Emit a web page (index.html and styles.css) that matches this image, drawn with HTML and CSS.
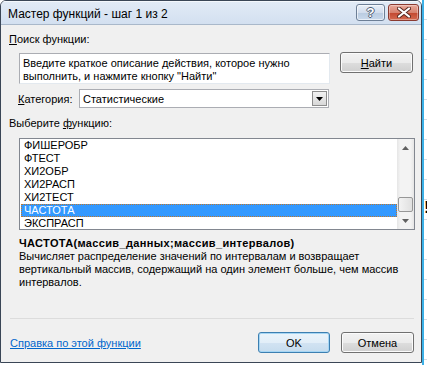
FILE: index.html
```html
<!DOCTYPE html>
<html lang="ru">
<head>
  <meta charset="UTF-8">
  <meta name="viewport" content="width=device-width, initial-scale=1.0">
  <title>Мастер функций - шаг 1 из 2</title>
  <link rel="stylesheet" href="styles.css">
</head>
<body>
  <div class="screen">
    <div class="dialog">
      <div class="titlebar">
        <span class="title">Мастер функций - шаг 1 из 2</span>
        <div class="caption-buttons">
          <span class="cap-btn help"><span class="help-glyph">?</span></span>
          <span class="cap-btn close">
            <svg width="14" height="11" viewBox="0 0 14 11">
              <path d="M2 1.5 L12 9.5 M12 1.5 L2 9.5" stroke="#5a2a22" stroke-width="4" stroke-linecap="round"/>
              <path d="M2 1.5 L12 9.5 M12 1.5 L2 9.5" stroke="#fff" stroke-width="2.2" stroke-linecap="round"/>
            </svg>
          </span>
        </div>
      </div>

      <div class="client">
        <div class="label first"><u>П</u>оиск функции:</div>

        <div class="search-row">
          <div class="search-box">Введите краткое описание действия, которое нужно<br>выполнить, и нажмите кнопку "Найти"</div>
          <button class="btn find"><u>Н</u>айти</button>
        </div>

        <div class="category-row">
          <span class="category-label"><u>К</u>атегория:</span>
          <div class="select">
            <span class="select-value">Статистические</span>
            <span class="select-arrow">
              <svg width="7" height="4" viewBox="0 0 7 4"><path d="M0 0 H7 L3.5 4 Z" fill="#000"/></svg>
            </span>
          </div>
        </div>

        <div class="label pick">Выберите <u>ф</u>ункцию:</div>

        <div class="listbox">
          <ul class="items">
            <li>ФИШЕРОБР</li>
            <li>ФТЕСТ</li>
            <li>ХИ2ОБР</li>
            <li>ХИ2РАСП</li>
            <li>ХИ2ТЕСТ</li>
            <li class="selected">ЧАСТОТА</li>
            <li>ЭКСПРАСП</li>
          </ul>
          <div class="scrollbar">
            <div class="scroll-btn">
              <svg width="7" height="4" viewBox="0 0 7 4"><path d="M0 4 H7 L3.5 0 Z" fill="#606060"/></svg>
            </div>
            <div class="track"><div class="thumb"></div></div>
            <div class="scroll-btn">
              <svg width="7" height="4" viewBox="0 0 7 4"><path d="M0 0 H7 L3.5 4 Z" fill="#606060"/></svg>
            </div>
          </div>
        </div>

        <div class="signature">ЧАСТОТА(массив_данных;массив_интервалов)</div>
        <p class="description">Вычисляет распределение значений по интервалам и возвращает<br>вертикальный массив, содержащий на один элемент больше, чем массив<br>интервалов.</p>

        <div class="separator"></div>

        <div class="footer">
          <a class="help-link" href="#">Справка по этой функции</a>
          <button class="btn default">OK</button>
          <button class="btn cancel">Отмена</button>
        </div>
      </div>
    </div>
    <div class="edge"></div>
    <div class="sheet"><span class="bang">!</span></div>
  </div>
</body>
</html>
```

FILE: styles.css
```css
* {
  box-sizing: border-box;
}
body {
  margin: 0;
  background: #fff;
  font-family: "Liberation Sans", Arial, sans-serif;
  font-size: 11px;
  color: #000;
}
.screen {
  display: flex;
  width: 427px;
  height: 365px;
  overflow: hidden;
}
.dialog {
  flex: none;
  width: 422px;
  height: 363px;
  border: 1px solid #3a4656;
  border-radius: 6px 6px 0 0;
  background: #f0f0f0;
  display: flex;
  flex-direction: column;
  overflow: hidden;
}
.edge {
  flex: none;
  width: 2px;
  background: #3cb0e6;
}
.sheet {
  flex: 1;
  background: repeating-linear-gradient(#fff 0 19px, #d6dbe3 19px 20px);
  padding-top: 198px;
}
.bang {
  display: block;
  font-size: 17px;
  font-weight: bold;
  line-height: 20px;
}

/* title bar */
.titlebar {
  flex: none;
  height: 24px;
  display: flex;
  align-items: flex-start;
  padding: 0 2px 0 7px;
  background: linear-gradient(#e2ebf6, #d3e0f0);
  border-bottom: 1px solid #a9b8ca;
  box-shadow: inset 0 1px 0 #f4f8fc;
}
.title {
  font-size: 12px;
  line-height: 14px;
  margin-top: 6px;
}
.caption-buttons {
  margin-left: auto;
  margin-top: 3px;
  display: flex;
  gap: 3px;
}
.cap-btn {
  height: 17px;
  border: 1px solid #6d7f96;
  border-radius: 3px;
  display: flex;
  align-items: center;
  justify-content: center;
}
.help {
  width: 29px;
  background: linear-gradient(#e8eff7 0%, #d2dded 50%, #b9cbe0 51%, #c9d9ec 100%);
  box-shadow: inset 0 0 0 1px rgba(255, 255, 255, 0.6);
}
.help-glyph {
  font-size: 13px;
  font-weight: bold;
  line-height: 13px;
  color: #fff;
  text-shadow: 1px 0 0 #4d5d73, -1px 0 0 #4d5d73, 0 1px 0 #4d5d73, 0 -1px 0 #4d5d73;
}
.close {
  width: 31px;
  border-color: #8a3a30;
  background: linear-gradient(#e8a99c 0%, #d7826f 50%, #c2472f 51%, #d46a50 100%);
  box-shadow: inset 0 0 0 1px rgba(255, 255, 255, 0.35);
}

/* client area */
.client {
  flex: 1;
  padding: 0 7px 0 8px;
}
.label {
  line-height: 13px;
}
.first {
  margin-top: 8px;
}
.search-row {
  display: flex;
  align-items: flex-start;
  margin-top: 6px;
}
.search-box {
  width: 311px;
  height: 31px;
  margin: 1px 0 0 10px;
  padding: 3px 0 0 3px;
  line-height: 13px;
  background: #fff;
  border: 1px solid #abadb3;
  border-right-color: #e3e9ef;
  border-bottom-color: #e3e9ef;
}
.btn {
  font: inherit;
  color: #000;
  padding: 0;
  border: 1px solid #707070;
  border-radius: 3px;
  background: linear-gradient(#f2f2f2 0%, #ebebeb 50%, #dddddd 51%, #cfcfcf 100%);
  box-shadow: inset 0 0 0 1px #fbfbfb;
}
.find {
  width: 73px;
  height: 21px;
  margin-left: 10px;
}
.category-row {
  display: flex;
  align-items: center;
  margin: 5px 0 0 9px;
}
.category-label {
  width: 61px;
}
.select {
  width: 250px;
  height: 19px;
  display: flex;
  align-items: center;
  background: #fff;
  border: 1px solid #abadb3;
  padding: 0 1px 0 3px;
}
.select-value {
  flex: 1;
}
.select-arrow {
  width: 15px;
  height: 15px;
  display: flex;
  align-items: center;
  justify-content: center;
  border: 1px solid #8d8d8d;
  background: linear-gradient(#f2f2f2, #d8d8d8);
}
.pick {
  margin-top: 9px;
}

/* function list */
.listbox {
  width: 396px;
  height: 92px;
  margin: 8px 0 0 10px;
  display: flex;
  background: #fff;
  border: 1px solid #828790;
}
.items {
  flex: 1;
  list-style: none;
  margin: 0;
  padding: 0;
}
.items li {
  height: 13px;
  line-height: 13px;
  padding-left: 3px;
  margin-left: 1px;
}
.items .selected {
  background: #3399ff;
  color: #fff;
  border: 1px dotted #c0782c;
  padding-left: 2px;
  line-height: 11px;
}
.scrollbar {
  width: 17px;
  display: flex;
  flex-direction: column;
  background: linear-gradient(90deg, #e6e6e6, #f3f3f3 20%, #f3f3f3 80%, #e6e6e6);
}
.scroll-btn {
  height: 17px;
  display: flex;
  align-items: center;
  justify-content: center;
}
.track {
  flex: 1;
  display: flex;
  flex-direction: column;
  justify-content: flex-end;
}
.thumb {
  height: 15px;
  margin: 0 1px;
  border: 1px solid #979797;
  border-radius: 2px;
  background: linear-gradient(90deg, #f3f3f3, #e0e0e0);
}

.signature {
  font-weight: bold;
  line-height: 13px;
  letter-spacing: 0.35px;
  margin: 7px 0 0 10px;
}
.description {
  margin: 0 0 0 10px;
  line-height: 13px;
}
.separator {
  margin: 29px 0 0 1px;
  border-top: 1px solid #dcdcdc;
}
.footer {
  display: flex;
  align-items: center;
  margin-top: 13px;
}
.help-link {
  flex: 1;
  margin-left: 1px;
  color: #0066cc;
}
.default {
  width: 72px;
  height: 21px;
  border-color: #3c7fb1;
  box-shadow: inset 0 0 0 1px #a6d6f4;
  background: linear-gradient(#eaf4fb 0%, #e2eef8 50%, #d2e3f2 51%, #c6dcee 100%);
}
.cancel {
  width: 73px;
  height: 21px;
  margin-left: 11px;
}
```
